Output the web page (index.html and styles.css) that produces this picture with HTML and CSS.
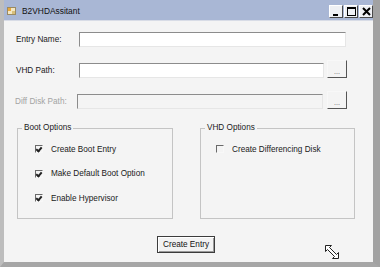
FILE: index.html
```html
<html lang="en">
<head>
  <meta charset="UTF-8">
  <link rel="stylesheet" href="styles.css">
</head>
<body>
<div class="window">
  <div class="titlebar">
    <svg class="app-icon" width="9" height="8" viewBox="0 0 9 8">
      <rect x="0.5" y="0.5" width="8" height="7" fill="#f3e7c4" stroke="#9a8a62"/>
      <rect x="1" y="1" width="3" height="3" fill="#e9a83a"/>
      <rect x="5" y="4" width="3" height="3" fill="#d9c07a"/>
    </svg>
    <span class="title">B2VHDAssitant</span>
    <div class="controls">
      <span class="ctl">
        <svg width="9" height="9" viewBox="0 0 9 9"><rect x="1" y="7" width="5" height="2" fill="#000"/></svg>
      </span>
      <span class="ctl">
        <svg width="9" height="9" viewBox="0 0 9 9"><rect x="0.5" y="0.5" width="8" height="8" fill="none" stroke="#000"/><rect x="0" y="0" width="9" height="2" fill="#000"/></svg>
      </span>
      <span class="ctl">
        <svg width="9" height="9" viewBox="0 0 9 9"><path d="M1 1 L8 8 M8 1 L1 8" stroke="#000" stroke-width="2"/></svg>
      </span>
    </div>
  </div>

  <div class="client">
    <div class="fields">
      <label class="lbl">Entry Name:</label>
      <span class="input span-2"></span>

      <label class="lbl">VHD Path:</label>
      <span class="input"></span>
      <span class="browse">...</span>

      <label class="lbl off">Diff Disk Path:</label>
      <span class="input input-off"></span>
      <span class="browse">...</span>
    </div>

    <div class="groups">
      <fieldset class="group boot">
        <legend>Boot Options</legend>
        <div class="group-body">
          <div class="check"><span class="box on"></span>Create Boot Entry</div>
          <div class="check"><span class="box on"></span>Make Default Boot Option</div>
          <div class="check"><span class="box on"></span>Enable Hypervisor</div>
        </div>
      </fieldset>
      <fieldset class="group vhd">
        <legend>VHD Options</legend>
        <div class="group-body">
          <div class="check"><span class="box"></span>Create Differencing Disk</div>
        </div>
      </fieldset>
    </div>

    <div class="actions">
      <button class="btn">Create Entry</button>
    </div>

    <svg class="cursor" width="17" height="17" viewBox="0 0 17 17">
      <polygon points="1.5,1.5 7.5,1.5 5.5,3.5 12.5,10.5 14.5,8.5 14.5,14.5 8.5,14.5 10.5,12.5 3.5,5.5 1.5,7.5" fill="#fff" stroke="#222" stroke-width="1"/>
    </svg>
  </div>
</div>
</body>
</html>
```

FILE: styles.css
```css
body {
  margin: 0;
  font-family: "Liberation Sans", Arial, sans-serif;
  font-size: 8.2px;
  color: #1a1a1a;
}

.window {
  width: 380px;
  height: 267px;
  box-sizing: border-box;
  display: flex;
  flex-direction: column;
  border-left: 4px solid #bdbdbd;
  border-right: 7px solid #a2a2a2;
  border-bottom: 5px solid #a6a6a6;
  background-color: #a9b7d5;
}

.titlebar {
  height: 20px;
  display: flex;
  align-items: center;
  background-color: #a9b7d5;
  border-bottom: 1px solid #d8dce6;
}

.app-icon {
  margin-left: 3px;
  margin-top: 2px;
}

.title {
  margin-left: 6px;
  margin-top: 2px;
  font-size: 8.4px;
  color: #111;
}

.controls {
  margin-left: auto;
  margin-top: 2px;
  display: flex;
  gap: 1px;
}

.ctl {
  width: 14px;
  height: 13px;
  box-sizing: border-box;
  display: flex;
  align-items: center;
  justify-content: center;
  background-color: #eef0f4;
  border-top: 1px solid #ffffff;
  border-left: 1px solid #ffffff;
  border-right: 1px solid #4a4a4a;
  border-bottom: 1px solid #4a4a4a;
}

.client {
  position: relative;
  flex: 1;
  display: flex;
  flex-direction: column;
  background-color: #f4f4f4;
}

.fields {
  display: grid;
  grid-template-columns: 60px 245px 20px;
  grid-auto-rows: 18px;
  column-gap: 3px;
  row-gap: 13px;
  padding: 8px 0 0 12px;
}

.lbl {
  align-self: end;
  line-height: 15px;
  white-space: nowrap;
}

.lbl.off {
  color: #a3a3a3;
  margin-left: -1px;
}

.input {
  align-self: end;
  height: 15px;
  box-sizing: border-box;
  background-color: #ffffff;
  border-top: 1px solid #8c8c8c;
  border-left: 1px solid #8c8c8c;
  border-right: 1px solid #e6e6e6;
  border-bottom: 1px solid #e6e6e6;
}

.span-2 {
  grid-column: 2 / 4;
  margin-right: 1px;
}

.input-off {
  background-color: #f4f4f4;
  margin-left: -2px;
  margin-right: 1px;
}

.browse {
  height: 18px;
  box-sizing: border-box;
  display: flex;
  align-items: flex-end;
  justify-content: center;
  line-height: 10px;
  font-size: 7px;
  color: #555;
  background-color: #f4f4f4;
  border-top: 1px solid #f8f8f8;
  border-left: 1px solid #f8f8f8;
  border-right: 1px solid #555;
  border-bottom: 1px solid #555;
}

.groups {
  display: flex;
  gap: 27px;
  margin: 14px 0 0 13px;
}

.group {
  margin: 0;
  padding: 0;
  height: 96px;
  box-sizing: border-box;
  border: 1px solid #c4c4c4;
}

.boot {
  width: 156px;
}

.vhd {
  width: 155px;
}

legend {
  margin-left: 4px;
  padding: 0 2px;
  line-height: 10px;
}

.group-body {
  display: flex;
  flex-direction: column;
  gap: 12.5px;
  padding: 10px 0 0 17px;
}

.vhd .group-body {
  padding-left: 15px;
}

.check {
  display: flex;
  align-items: center;
  height: 12px;
  white-space: nowrap;
}

.box {
  width: 8px;
  height: 8px;
  box-sizing: border-box;
  margin-right: 8px;
  border-top: 1px solid #6a6a6a;
  border-left: 1px solid #6a6a6a;
  border-right: 1px solid #f8f8f8;
  border-bottom: 1px solid #f8f8f8;
  background-color: #f4f4f4;
  position: relative;
}

.box.on::after {
  content: "";
  position: absolute;
  left: 1px;
  top: 0px;
  width: 2px;
  height: 4px;
  border-right: 2px solid #222;
  border-bottom: 2px solid #222;
  transform: rotate(40deg);
}

.actions {
  display: flex;
  justify-content: center;
  margin-top: 17px;
  padding-right: 5px;
}

.btn {
  width: 58px;
  height: 17px;
  padding: 0;
  font-family: "Liberation Sans", Arial, sans-serif;
  font-size: 8.2px;
  color: #111;
  background-color: #f2f2f2;
  border: 1px solid #3c3c3c;
  box-shadow: inset 1px 1px 0 #ffffff, inset -1px -1px 0 #9a9a9a;
}

.cursor {
  position: absolute;
  left: 320px;
  top: 223px;
}
```
